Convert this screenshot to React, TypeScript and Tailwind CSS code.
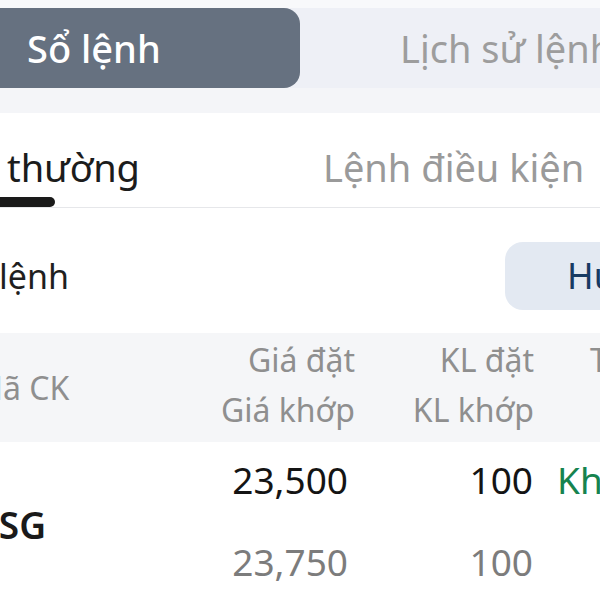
export default function App() {
  return (
    <div className="w-[600px] h-[600px] overflow-hidden bg-white font-['Noto_Sans',sans-serif] whitespace-nowrap">
      {/* top strip */}
      <div className="h-[8px] bg-[#f8f9fb]" />

      {/* segmented tabs */}
      <div className="flex h-[80px] bg-[#eef0f6]">
        <div className="-ml-[40px] w-[340px] shrink-0 rounded-[16px] bg-[#667180] pl-[67px] flex items-center">
          <span className="text-[38px] leading-none font-medium text-white">Sổ lệnh</span>
        </div>
        <div className="pl-[100px] flex items-center">
          <span className="text-[38px] leading-none text-[#9d9d9d]">Lịch sử lệnh</span>
        </div>
      </div>
      <div className="h-[25px] bg-[#f4f5f8]" />

      {/* order type tabs */}
      <div className="flex items-start border-b border-[#e6e7ea] pt-[35px]">
        <div className="-ml-[160px] w-[300px] shrink-0 flex flex-col items-end">
          <span className="text-[38px] leading-none text-[#1c1c1c]">Lệnh thường</span>
          <div className="mt-[11px] mr-[85px] h-[10px] w-[80px] rounded-full bg-[#1a1a1a]" />
        </div>
        <div className="ml-[183px]">
          <span className="text-[38px] leading-none text-[#9a9a9a]">Lệnh điều kiện</span>
        </div>
      </div>

      {/* toolbar */}
      <div className="flex items-center pt-[34px] pb-[23px]">
        <div className="-ml-[132px] w-[201px] shrink-0 text-right text-[34px] leading-none text-[#1f1f1f]">
          Chọn lệnh
        </div>
        <button className="ml-[436px] h-[68px] w-[200px] shrink-0 rounded-[18px] bg-[#e3e9f2] pl-[62px] flex items-center text-[36px] leading-none text-[#173a63]">
          Hủy lệnh
        </button>
      </div>

      {/* table header */}
      <div className="grid grid-cols-[246px_135px_179px_200px] -ml-[26px] h-[109px] bg-[#f5f6f8] text-[32px] text-[#8f8f8f]">
        <div className="flex items-center leading-none">Mã CK</div>
        <div className="pt-[2px] text-right leading-[50px]">
          <div>Giá đặt</div>
          <div>Giá khớp</div>
        </div>
        <div className="pt-[2px] text-right leading-[50px]">
          <div>KL đặt</div>
          <div>KL khớp</div>
        </div>
        <div className="pt-[2px] pl-[56px] leading-[50px]">Trạng thái</div>
      </div>

      {/* order row */}
      <div className="grid grid-cols-[246px_135px_179px_200px] -ml-[26px] text-[37px]">
        <div className="flex items-center">
          <span className="text-[37px] leading-none font-semibold text-[#1a1a1a]">ASG</span>
        </div>
        <div className="pr-[7px] text-right">
          <div className="leading-[76px] text-[#141414]">23,500</div>
          <div className="leading-[88px] text-[#7c7c7c]">23,750</div>
        </div>
        <div className="pr-[1px] text-right">
          <div className="leading-[76px] text-[#141414]">100</div>
          <div className="leading-[88px] text-[#7c7c7c]">100</div>
        </div>
        <div className="pl-[23px]">
          <div className="leading-[76px] text-[#16834f]">Khớp</div>
        </div>
      </div>
    </div>
  );
}
